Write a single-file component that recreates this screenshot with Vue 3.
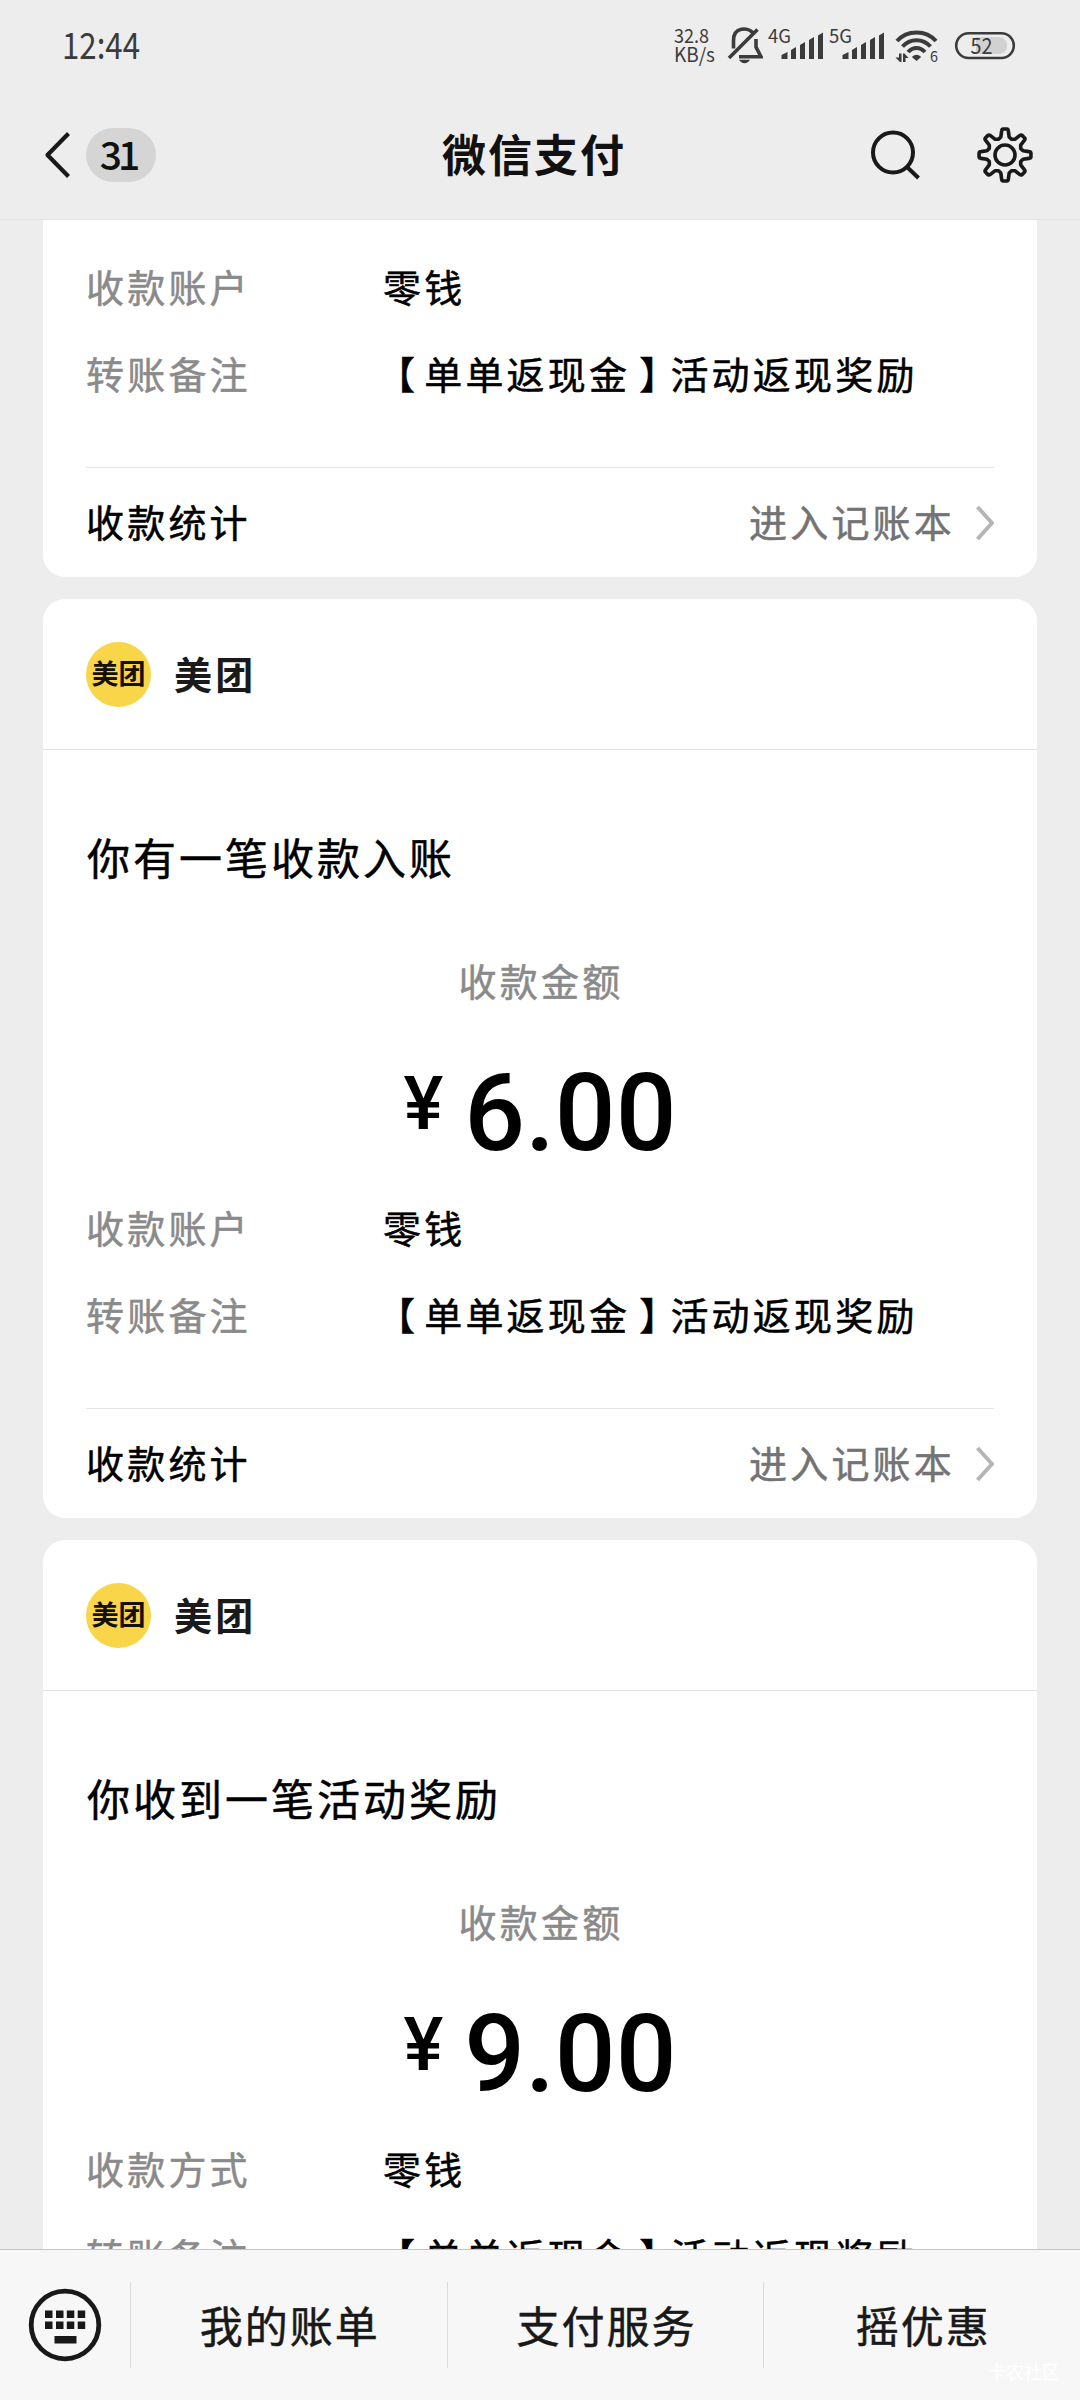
<script setup>
const remark = '【单单返现金】活动返现奖励'

const cards = [
  {
    rows: [
      { label: '收款账户', value: '零钱' },
      { label: '转账备注', value: remark },
    ],
  },
  {
    title: '你有一笔收款入账',
    amount: '6.00',
    rows: [
      { label: '收款账户', value: '零钱' },
      { label: '转账备注', value: remark },
    ],
  },
  {
    title: '你收到一笔活动奖励',
    amount: '9.00',
    rows: [
      { label: '收款方式', value: '零钱' },
      { label: '转账备注', value: remark },
    ],
  },
]

const menus = ['我的账单', '支付服务', '摇优惠']
const networks = ['4G', '5G']
const teeth = [0, 45, 90, 135, 180, 225, 270, 315]

// Brackets get their own spans so they can be spaced apart from the words.
const pieces = (text) => text.split(/([【】])/).filter(Boolean)
const pieceClass = (piece) => ({ open: piece === '【', close: piece === '】' })

// Closed gear outline: each tooth is rounded at its tip, flanks meet in the valleys.
const gearPath = (() => {
  const pt = (r, deg) => {
    const a = (deg * Math.PI) / 180
    return `${(28 + r * Math.sin(a)).toFixed(2)} ${(28 - r * Math.cos(a)).toFixed(2)}`
  }
  return (
    teeth
      .map((t, i) => `${i ? 'L' : 'M'}${pt(18.5, t - 13)} L${pt(24.2, t - 8)} Q${pt(26, t - 7)} ${pt(26, t - 4)} L${pt(26, t + 4)} Q${pt(26, t + 7)} ${pt(24.2, t + 8)} L${pt(18.5, t + 13)} L${pt(17, t + 22.5)}`)
      .join(' ') + 'Z'
  )
})()
</script>

<template>
  <div class="screen">
    <header class="top">
      <div class="status">
        <svg class="time" width="90" height="56" viewBox="0 0 90 56">
          <text x="0" y="41.5" textLength="78" lengthAdjust="spacingAndGlyphs" font-size="37">12:44</text>
        </svg>
        <div class="indicators">
          <svg width="44" height="56" viewBox="0 -8 44 56">
            <text x="0" y="18" textLength="35" lengthAdjust="spacingAndGlyphs" font-size="19.5">32.8</text>
            <text x="0" y="37" textLength="41" lengthAdjust="spacingAndGlyphs" font-size="19.5">KB/s</text>
          </svg>
          <svg class="bell" width="36" height="40" viewBox="0 0 36 40" fill="none" stroke="#3b3b3b" stroke-width="3.6">
            <path d="M6.5 23.5V15.5C6.5 1.500 21 2 26 8" />
            <path d="M29 14V22L34 31.800H12" />
            <path d="M2 33L30.500 4.500" />
            <path d="M12 34.800H23Q21 38.200 17.500 38.200Q14 38.200 12 34.800Z" fill="#3b3b3b" stroke="none" />
          </svg>
          <svg v-for="net in networks" :key="net" class="signal" width="56" height="56" viewBox="0 -8 56 56">
            <text x="0" y="18" textLength="23" lengthAdjust="spacingAndGlyphs" font-size="18.500">{{ net }}</text>
            <path d="M13.500 30L19.500 27V34H13.500ZM23 25L28 22V34H23ZM32 20L37 17V34H32ZM41 15L46 12V34H41ZM50 10.500L55 7.500V34H50Z" />
          </svg>
          <svg class="wifi" width="44" height="56" viewBox="0 -8 44 56">
            <g fill="none" stroke="#3b3b3b" stroke-width="4">
              <path d="M2 16C12 4.500 31 4.500 41 16" />
              <path d="M7.500 21.500C15 13 28 13 35.500 21.500" />
              <path d="M13 27C18 21.500 25 21.500 30 27" />
            </g>
            <path d="M21.500 36L16.800 32Q21.500 27.500 26.200 32Z" />
            <path d="M4 28.500H6.500V37H5L.500 32.500H4ZM8 37V28.500H9.500L13.500 33H10.500V37Z" />
            <text x="35" y="36.500" textLength="8" lengthAdjust="spacingAndGlyphs" font-size="15">6</text>
          </svg>
          <svg class="battery" width="62" height="40" viewBox="0 0 62 40">
            <path d="M22 12H44Q53 12 53 20.500Q53 29 44 29H22Z" fill="#d1d1d1" />
            <rect x="2.200" y="8.200" width="57.600" height="24.800" rx="12.400" fill="none" stroke="#3b3b3b" stroke-width="2.600" />
            <text x="16.500" y="28.500" textLength="22" lengthAdjust="spacingAndGlyphs" font-size="22">52</text>
          </svg>
        </div>
      </div>
      <nav class="nav">
        <div class="side">
          <svg class="back" width="28" height="50" viewBox="0 0 28 50" fill="none" stroke="#191919" stroke-width="4.200">
            <path d="M24.500 3.500L3.500 25L24.500 46.500" stroke-linejoin="round" />
          </svg>
          <span class="badge">31</span>
        </div>
        <h1>微信支付</h1>
        <div class="side right">
          <svg width="52" height="52" viewBox="0 0 52 52" fill="none" stroke="#191919" stroke-width="4">
            <circle cx="23" cy="23.500" r="20" />
            <path d="M37 38L48.500 49" />
          </svg>
          <svg class="gear" width="56" height="56" viewBox="0 0 56 56" fill="none" stroke="#191919" stroke-width="3.600" stroke-linejoin="round">
            <path :d="gearPath" />
            <circle cx="28" cy="28" r="10" />
          </svg>
        </div>
      </nav>
    </header>

    <main class="feed">
      <article v-for="(card, i) in cards" :key="i" class="card">
        <template v-if="card.title">
          <div class="merchant">
            <span class="logo">美团</span>
            <span class="name">美团</span>
          </div>
          <h2>{{ card.title }}</h2>
          <p class="caption">收款金额</p>
          <p class="amount"><span class="yen">¥</span><span>{{ card.amount }}</span></p>
        </template>
        <dl>
          <div v-for="row in card.rows" :key="row.label" class="row">
            <dt>{{ row.label }}</dt>
            <dd><span v-for="(piece, n) in pieces(row.value)" :key="n" :class="pieceClass(piece)">{{ piece }}</span></dd>
          </div>
        </dl>
        <div class="ledger">
          <span>收款统计</span>
          <span class="enter">进入记账本</span>
          <svg width="20" height="38" viewBox="0 0 20 38" fill="none" stroke="#b5b5b5" stroke-width="4">
            <path d="M3.500 3L18 19L3.500 35" stroke-linejoin="round" />
          </svg>
        </div>
      </article>
    </main>

    <footer class="bar">
      <div class="keyboard">
        <svg width="74" height="74" viewBox="0 0 74 74">
          <circle cx="37" cy="37" r="33.800" fill="none" stroke="#191919" stroke-width="4.800" />
          <path fill="#191919" d="M17 22.500h7.500v7.500h-7.500zM28 22.500h7.500v7.500h-7.500zM38.800 22.500h7.500v7.500h-7.500zM49.700 22.500h7.500v7.500h-7.500zM17 33.500h7.500v7.500h-7.500zM28 33.500h7.500v7.500h-7.500zM38.800 33.500h7.500v7.500h-7.500zM49.700 33.500h7.500v7.500h-7.500zM26.500 48h22v7.500h-22z" />
        </svg>
      </div>
      <div v-for="menu in menus" :key="menu" class="menu"><span>{{ menu }}</span></div>
      <span class="watermark">卡农社区</span>
    </footer>
  </div>
</template>

<style>
body {
  margin: 0;
  background: #ededed;
}
</style>

<style scoped>
.screen {
  width: 1080px;
  height: 2400px;
  display: flex;
  flex-direction: column;
  overflow: hidden;
  background: #ededed;
  color: #000;
  font-family: "Noto Sans CJK SC", sans-serif;
  font-size: 38px;
  letter-spacing: 3.2px;
  text-spacing-trim: space-all;
}

h1, h2, p, dl, dt, dd {
  margin: 0;
  font-weight: 400;
}

svg {
  display: block;
  flex: none;
}

h2, .caption, .row, .ledger, .menu {
  -webkit-text-stroke: 0.5px currentColor;
}

.top {
  flex: none;
  height: 220px;
  box-sizing: border-box;
  border-bottom: 1px solid #e4e4e4;
}

.status {
  height: 90px;
  padding: 0 64px 0 62px;
  display: flex;
  align-items: center;
  justify-content: space-between;
  fill: #3b3b3b;
  letter-spacing: 0;
}

.indicators {
  display: flex;
  align-items: center;
}

.bell {
  margin-left: 9px;
}

.signal {
  margin-left: 5px;
}

.wifi {
  margin-left: 10px;
}

.battery {
  margin-left: 15px;
}

.nav {
  height: 130px;
  padding: 0 46px 0 44px;
  display: flex;
  align-items: center;
  justify-content: space-between;
}

.side {
  width: 320px;
  display: flex;
  align-items: center;
}

.right {
  justify-content: flex-end;
}

.badge {
  margin-left: 14px;
  width: 70px;
  height: 54px;
  border-radius: 27px;
  background: #d5d5d5;
  color: #111;
  font-size: 39px;
  font-weight: 500;
  line-height: 50px;
  letter-spacing: -4px;
  text-indent: -6px;
  text-align: center;
}

h1 {
  color: #111;
  font-size: 44px;
  font-weight: 700;
  letter-spacing: 2px;
  line-height: 60px;
  padding: 0 10px 4px 0;
}

.gear {
  margin-left: 55px;
  margin-right: 1px;
}

.feed {
  flex: 1;
  min-height: 0;
  overflow: hidden;
  display: flex;
  flex-direction: column;
  gap: 22px;
  padding: 0 43px;
}

.card {
  flex: none;
  border-radius: 22px;
  background: #fff;
}

.card:first-child {
  border-radius: 0 0 22px 22px;
  padding-top: 23px;
}

.merchant {
  height: 150px;
  padding-left: 43px;
  display: flex;
  align-items: center;
  border-bottom: 1px solid #e2e2e2;
}

.logo {
  width: 65px;
  height: 65px;
  border-radius: 50%;
  background: #f8d549;
  color: #16100c;
  font-size: 27px;
  font-weight: 700;
  letter-spacing: 0;
  line-height: 62px;
  text-align: center;
}

.name {
  margin-left: 23px;
  padding-bottom: 4px;
  color: #1a1a1a;
  font-weight: 700;
}

h2 {
  margin: 76px 42px 0 44px;
  height: 60px;
  line-height: 60px;
  font-size: 43px;
  letter-spacing: 3px;
}

.caption {
  margin-top: 64px;
  padding-left: 2px;
  height: 60px;
  line-height: 60px;
  color: #8a8a8a;
  text-align: center;
}

.amount {
  height: 174px;
  display: flex;
  justify-content: center;
  align-items: flex-start;
  gap: 21px;
  font-family: Roboto, sans-serif;
  font-size: 107px;
  font-weight: 500;
  line-height: 208px;
  letter-spacing: 0;
}

.yen {
  font-size: 75px;
  line-height: 187px;
}

.row {
  height: 87px;
  padding: 0 43px;
  display: flex;
  line-height: 85px;
}

dt {
  width: 297px;
  color: #8a8a8a;
}

dd {
  white-space: nowrap;
}

.open {
  margin: 0 6px 0 -6px;
}

.close {
  margin: 0 -10px 0 9px;
}

.ledger {
  height: 109px;
  margin: 50px 43px 0;
  border-top: 1px solid #e5e5e5;
  display: flex;
  align-items: center;
  line-height: 106px;
}

.ledger span {
  height: 109px;
}

.enter {
  margin-left: auto;
  margin-right: 19px;
  color: #737373;
}

.bar {
  position: relative;
  flex: none;
  height: 151px;
  box-sizing: border-box;
  border-top: 1px solid #c4c4c4;
  background: #f7f7f7;
  display: flex;
  align-items: center;
  color: #191919;
  font-size: 43px;
  letter-spacing: 2px;
}

.keyboard {
  width: 130px;
  display: flex;
  justify-content: center;
}

.menu {
  flex: 1;
  height: 86px;
  border-left: 1px solid #dcdcdc;
  text-align: center;
  text-indent: 2px;
  line-height: 84px;
}

.watermark {
  position: absolute;
  right: 20px;
  bottom: 16px;
  color: #fff;
  font-size: 18px;
  letter-spacing: 0;
  line-height: 26px;
}
</style>
